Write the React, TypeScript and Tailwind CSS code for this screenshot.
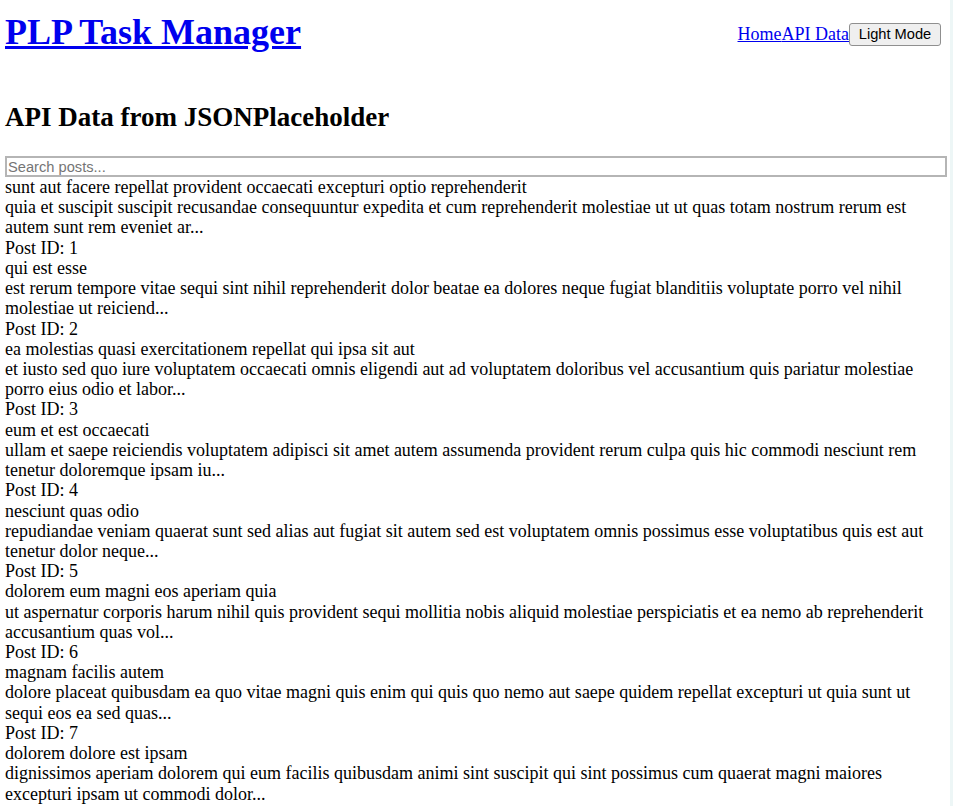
import React from "react";

const posts = [
  {
    id: 1,
    title: "sunt aut facere repellat provident occaecati excepturi optio reprehenderit",
    body: "quia et suscipit suscipit recusandae consequuntur expedita et cum reprehenderit molestiae ut ut quas totam nostrum rerum est autem sunt rem eveniet ar...",
  },
  {
    id: 2,
    title: "qui est esse",
    body: "est rerum tempore vitae sequi sint nihil reprehenderit dolor beatae ea dolores neque fugiat blanditiis voluptate porro vel nihil molestiae ut reiciend...",
  },
  {
    id: 3,
    title: "ea molestias quasi exercitationem repellat qui ipsa sit aut",
    body: "et iusto sed quo iure voluptatem occaecati omnis eligendi aut ad voluptatem doloribus vel accusantium quis pariatur molestiae porro eius odio et labor...",
  },
  {
    id: 4,
    title: "eum et est occaecati",
    body: "ullam et saepe reiciendis voluptatem adipisci sit amet autem assumenda provident rerum culpa quis hic commodi nesciunt rem tenetur doloremque ipsam iu...",
  },
  {
    id: 5,
    title: "nesciunt quas odio",
    body: "repudiandae veniam quaerat sunt sed alias aut fugiat sit autem sed est voluptatem omnis possimus esse voluptatibus quis est aut tenetur dolor neque...",
  },
  {
    id: 6,
    title: "dolorem eum magni eos aperiam quia",
    body: "ut aspernatur corporis harum nihil quis provident sequi mollitia nobis aliquid molestiae perspiciatis et ea nemo ab reprehenderit accusantium quas vol...",
  },
  {
    id: 7,
    title: "magnam facilis autem",
    body: "dolore placeat quibusdam ea quo vitae magni quis enim qui quis quo nemo aut saepe quidem repellat excepturi ut quia sunt ut sequi eos ea sed quas...",
  },
  {
    id: 8,
    title: "dolorem dolore est ipsam",
    body: "dignissimos aperiam dolorem qui eum facilis quibusdam animi sint suscipit qui sint possimus cum quaerat magni maiores excepturi ipsam ut commodi dolor...",
  },
  {
    id: 9,
    title: "nesciunt iure omnis dolorem tempora et accusantium",
    body: "consectetur animi nesciunt iure dolore enim quia ad veniam autem ut quam aut nobis et est aut quod aut provident voluptas autem voluptas...",
  },
  {
    id: 10,
    title: "optio molestias id quia eum",
    body: "quo et expedita modi cum officia vel magni doloribus qui repudiandae vero nisi sit quos veniam quod sed accusamus veritatis error...",
  },
];

export default function App() {
  return (
    <div className="flex h-screen overflow-hidden bg-white">
      <div className="min-w-0 flex-1 pl-[5px] pr-[3px] font-['Liberation_Serif',serif] text-[18px] leading-[20.22px] text-black">
        <header className="flex items-center justify-between pt-[12px] pr-[6px]">
          <h1 className="text-[36px] font-bold leading-[41px]">
            <a href="#" className="text-[#0000ee] underline">
              PLP Task Manager
            </a>
          </h1>
          <nav className="flex items-center pt-[3px]">
            <a href="#" className="text-[#0000ee] underline">
              Home
            </a>
            <a href="#" className="text-[#0000ee] underline">
              API Data
            </a>
            <button className="flex h-[23px] w-[92px] items-center justify-center rounded-[3px] border border-[#8f8f8f] bg-[#efefef] font-['Liberation_Sans',sans-serif] text-[14.67px] leading-none text-black">
              Light Mode
            </button>
          </nav>
        </header>
        <h2 className="mt-[49px] text-[27px] font-bold leading-[31px]">
          API Data from JSONPlaceholder
        </h2>
        <input
          type="text"
          placeholder="Search posts..."
          className="mt-[23px] block h-[21px] w-full border-2 border-[#b5b5b5] bg-white pl-[1px] font-['Liberation_Sans',sans-serif] text-[14.67px] leading-none text-black outline-none placeholder:text-[#757575]"
        />
        <div>
          {posts.map((p) => (
            <div key={p.id}>
              <div>{p.title}</div>
              <div>{p.body}</div>
              <div>Post ID: {p.id}</div>
            </div>
          ))}
        </div>
      </div>
      <div className="w-[3px] shrink-0 bg-[#edf6f6]" />
    </div>
  );
}
